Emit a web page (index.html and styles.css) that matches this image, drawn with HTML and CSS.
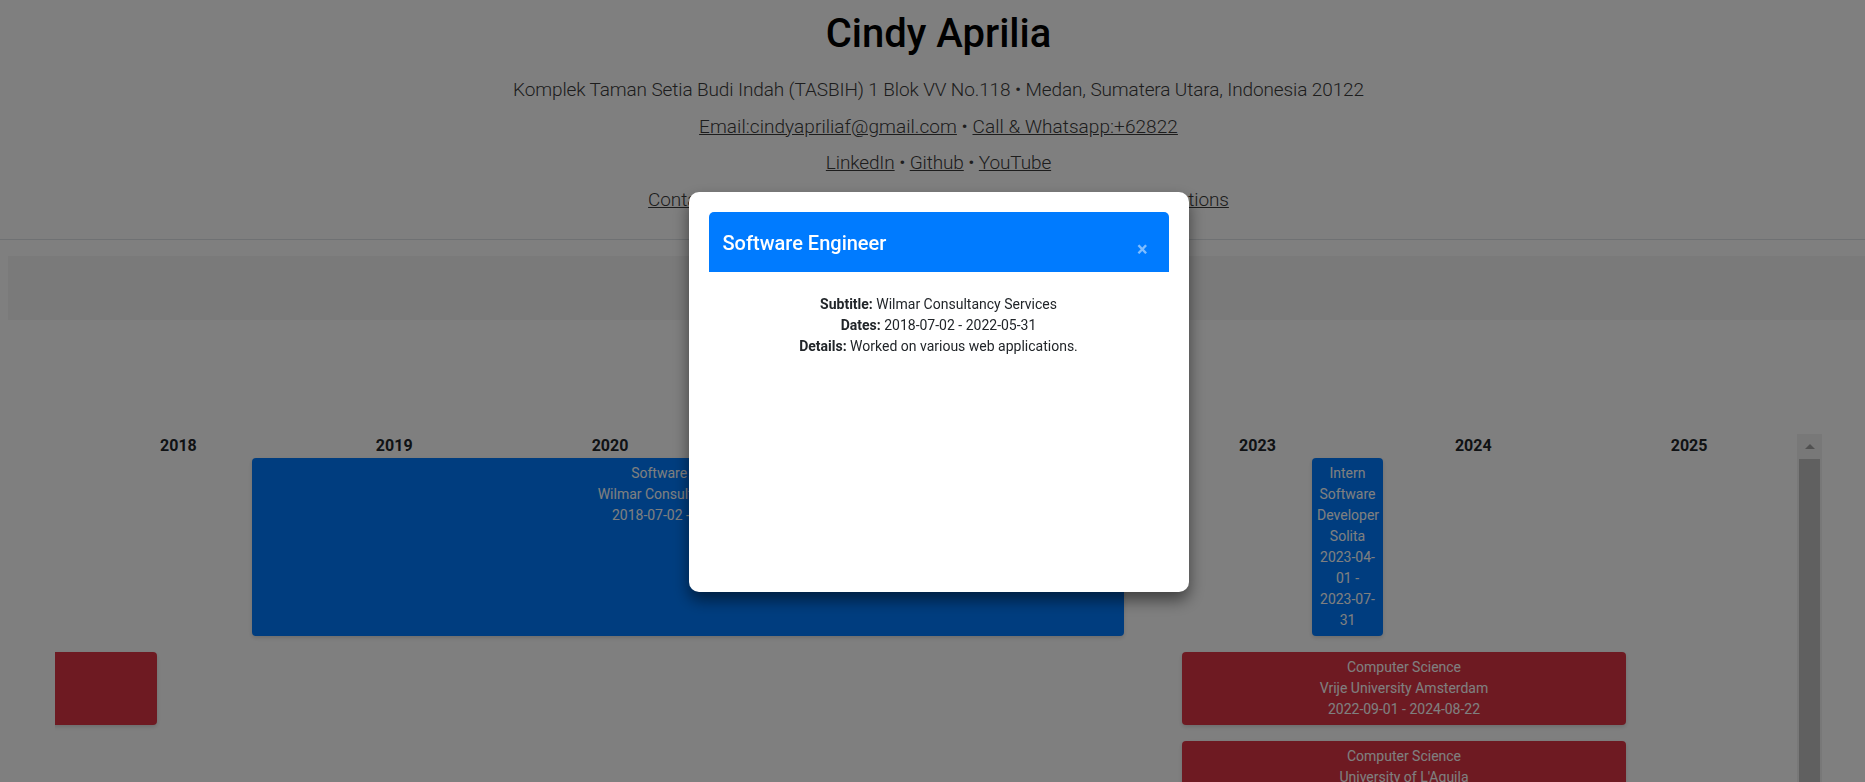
FILE: index.html
```html
<!DOCTYPE html>
<html lang="en">
<head>
<meta charset="utf-8">
<title>Cindy Aprilia</title>
<link rel="stylesheet" href="styles.css">
</head>
<body>
<header class="site-header">
  <h1 class="name">Cindy Aprilia</h1>
  <p class="lead-line">Komplek Taman Setia Budi Indah (TASBIH) 1 Blok VV No.118 • Medan, Sumatera Utara, Indonesia 20122</p>
  <p class="lead-line contact-line"><a href="#">Email:cindyapriliaf@gmail.com</a> • <a href="#">Call &amp; Whatsapp:+62822</a></p>
  <p class="lead-line"><a href="#">LinkedIn</a> • <a href="#">Github</a> • <a href="#">YouTube</a></p>
  <nav class="lead-line section-nav">
    <a href="#">Contact</a>
    <a href="#">Family</a>
    <a href="#">Career</a>
    <a href="#">Timeline</a>
    <a href="#">Portfolio</a>
    <a href="#">Awards</a>
    <a href="#">Certifications</a>
  </nav>
</header>

<main class="content">
  <div class="filter-bar"></div>

  <section class="timeline">
    <div class="timeline-scroll">
      <div class="years">
        <div class="year">2018</div>
        <div class="year">2019</div>
        <div class="year">2020</div>
        <div class="year">2021</div>
        <div class="year">2022</div>
        <div class="year">2023</div>
        <div class="year">2024</div>
        <div class="year">2025</div>
      </div>

      <div class="track track-tall">
        <div class="bar bar-work" style="left:197px;width:872px">Software Engineer<br>Wilmar Consultancy Services<br>2018-07-02 - 2022-05-31</div>
        <div class="bar bar-work" style="left:1257px;width:71px">Intern Software Developer<br>Solita<br>2023-04-01 - 2023-07-31</div>
      </div>

      <div class="track">
        <div class="bar bar-edu" style="left:-498px;width:600px"></div>
        <div class="bar bar-edu" style="left:1127px;width:444px">Computer Science<br>Vrije University Amsterdam<br>2022-09-01 - 2024-08-22</div>
      </div>

      <div class="track">
        <div class="bar bar-edu" style="left:1127px;width:444px">Computer Science<br>University of L'Aquila<br>2022-09-01 - 2024-08-22</div>
      </div>
    </div>
    <div class="scrollbar">
      <div class="scrollbar-up"></div>
      <div class="scrollbar-thumb"></div>
    </div>
  </section>
</main>

<div class="backdrop"></div>

<div class="modal">
  <div class="modal-dialog">
    <div class="modal-content">
      <div class="modal-header">
        <h5 class="modal-title">Software Engineer</h5>
        <span class="modal-close">×</span>
      </div>
      <div class="modal-body">
        <p><strong>Subtitle:</strong> Wilmar Consultancy Services</p>
        <p><strong>Dates:</strong> 2018-07-02 - 2022-05-31</p>
        <p><strong>Details:</strong> Worked on various web applications.</p>
      </div>
    </div>
  </div>
</div>
</body>
</html>
```

FILE: styles.css
```css
html, body {
  margin: 0;
  padding: 0;
}

body {
  font-family: Roboto, "Noto Sans", "Liberation Sans", sans-serif;
  color: #212529;
  background: #fff;
  overflow: hidden;
  height: 782px;
}

a {
  color: inherit;
  text-decoration: underline;
}

/* ---------- header ---------- */
.site-header {
  padding: 9.5px 0 21px 12px;
  text-align: center;
  border-bottom: 1px solid #dee2e6;
}

.name {
  margin: 0 0 14.5px;
  font-size: 40px;
  line-height: 48px;
  font-weight: 500;
  color: #000;
}

.lead-line {
  margin: 0;
  font-size: 19px;
  line-height: 36.5px;
  font-weight: 300;
  letter-spacing: -0.12px;
  color: #3a3a3a;
}

.contact-line {
  letter-spacing: 0.06px;
}

.section-nav {
  display: flex;
  justify-content: center;
  gap: 16px;
}

/* ---------- content ---------- */
.content {
  padding-top: 16px;
}

.filter-bar {
  margin-left: 8px;
  height: 64px;
  background: #f5f5f5;
}

.timeline {
  display: flex;
  margin: 114px 43px 0 55px;
  height: 520px;
}

.timeline-scroll {
  flex: 1;
  overflow: hidden;
  padding-left: 15.5px;
}

.years {
  display: grid;
  grid-template-columns: repeat(8, 1fr);
  height: 24px;
}

.year {
  text-align: center;
  font-size: 16px;
  line-height: 24px;
  font-weight: 700;
  color: #212529;
}

.track {
  position: relative;
  height: 73px;
  margin: 0 0 16px -15.5px;
}

.track-tall {
  height: 178px;
}

.bar {
  position: absolute;
  top: 0;
  bottom: 0;
  box-sizing: border-box;
  padding: 5px;
  border-radius: 4px;
  color: #fff;
  font-size: 14px;
  line-height: 21px;
  text-align: center;
  overflow: hidden;
  box-shadow: 0 2px 4px rgba(0, 0, 0, 0.15);
}

.bar-work {
  background: #007bff;
}

.bar-edu {
  background: #dc3545;
}

.scrollbar {
  width: 25px;
  background: #f1f1f1;
  display: flex;
  flex-direction: column;
  align-items: center;
}

.scrollbar-up {
  height: 25px;
  width: 25px;
  display: flex;
  align-items: center;
  justify-content: center;
}

.scrollbar-up::before {
  content: "";
  width: 0;
  height: 0;
  border-left: 5px solid transparent;
  border-right: 5px solid transparent;
  border-bottom: 5px solid #a3a3a3;
}

.scrollbar-thumb {
  flex: 1;
  width: 21px;
  background: #c1c1c1;
}

/* ---------- modal ---------- */
.backdrop {
  position: fixed;
  inset: 0;
  background: rgba(0, 0, 0, 0.5);
}

.modal {
  position: fixed;
  inset: 0;
  padding-left: 12px;
}

.modal-dialog {
  width: 500px;
  margin: 192px auto 0;
}

.modal-content {
  box-sizing: border-box;
  height: 400px;
  padding: 20px;
  background: #fff;
  border-radius: 10px;
  box-shadow: 0 8px 16px rgba(0, 0, 0, 0.5);
}

.modal-header {
  display: flex;
  align-items: flex-start;
  justify-content: space-between;
  height: 60px;
  box-sizing: border-box;
  padding: 16px 21px 0 14px;
  background: #007bff;
  border-radius: 5px 5px 0 0;
}

.modal-title {
  margin: 0;
  font-size: 20px;
  line-height: 30px;
  font-weight: 500;
  color: #fff;
}

.modal-close {
  margin-top: 9px;
  font-size: 20px;
  line-height: 24px;
  font-weight: 700;
  color: #fff;
  opacity: 0.5;
}

.modal-body {
  padding-top: 21.5px;
  text-align: center;
  font-size: 14px;
  line-height: 21px;
  color: #212529;
}

.modal-body p {
  margin: 0;
}

.modal-body strong {
  font-weight: 700;
}
```
